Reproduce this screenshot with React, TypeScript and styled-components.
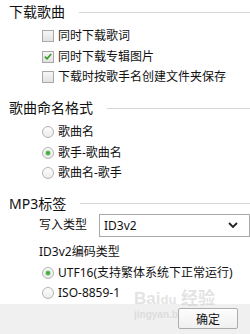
import React from 'react';
import styled, { createGlobalStyle } from 'styled-components';

const GlobalStyle = createGlobalStyle`
  html, body {
    margin: 0;
    padding: 0;
    background: #fff;
  }
  body {
    font-family: "Noto Sans", "Noto Sans CJK SC", sans-serif;
    color: #111;
  }
`;

function CheckIcon() {
  return (
    <svg width="11" height="11" viewBox="0 0 11 11">
      <path d="M2 5.6 L4.4 8 L9 2.8" fill="none" stroke="#3b9b2f" strokeWidth="1.9" />
    </svg>
  );
}

function Check({ label, checked }: { label: string; checked?: boolean }) {
  return (
    <Item>
      <Box>{checked && <CheckIcon />}</Box>
      <Label>{label}</Label>
    </Item>
  );
}

function Radio({ label, checked }: { label: string; checked?: boolean }) {
  return (
    <Item>
      <Circle>{checked && <Dot />}</Circle>
      <Label>{label}</Label>
    </Item>
  );
}

function App() {
  return (
    <Page>
      <GlobalStyle />
      <Content>
        <Section>
          <Header>
            <Title>下载歌曲</Title>
            <Rule />
          </Header>
          <List>
            <Check label="同时下载歌词" />
            <Check label="同时下载专辑图片" checked />
            <Check label="下载时按歌手名创建文件夹保存" />
          </List>
        </Section>

        <Section gap={10.5}>
          <Header>
            <Title>歌曲命名格式</Title>
            <Rule />
          </Header>
          <List>
            <Radio label="歌曲名" />
            <Radio label="歌手-歌曲名" checked />
            <Radio label="歌曲名-歌手" />
          </List>
        </Section>

        <Section gap={10}>
          <Header>
            <Title>MP3标签</Title>
            <Rule />
          </Header>
          <SelectRow>
            <FieldLabel>写入类型</FieldLabel>
            <Select>
              <span>ID3v2</span>
              <svg width="10" height="8" viewBox="0 0 10 8">
                <path d="M1 2 L5 6 L9 2" fill="none" stroke="#222" strokeWidth="1.8" />
              </svg>
            </Select>
          </SelectRow>
          <SubLabel>ID3v2编码类型</SubLabel>
          <RadioList>
            <Radio label="UTF16(支持繁体系统下正常运行)" checked />
            <Radio label="ISO-8859-1" />
          </RadioList>
        </Section>
      </Content>

      <Footer>
        <Watermark>
          <Mark>Bai<Paw>du</Paw> 经验</Mark>
          <Url>jingyan.baidu.com</Url>
        </Watermark>
        <Button>确定</Button>
      </Footer>
    </Page>
  );
}

export default App;

const Page = styled.div`
  position: relative;
  width: 250px;
  height: 334px;
  overflow: hidden;
  display: flex;
  flex-direction: column;
`;

const Content = styled.div`
  padding-top: 2px;
  flex: 1;
`;

const Section = styled.section<{ gap?: number }>`
  margin-top: ${(p) => p.gap ?? 0}px;
`;

const Header = styled.div`
  display: flex;
  align-items: center;
  height: 20px;
  padding-left: 9px;
  gap: 14px;
`;

const Title = styled.div`
  font-size: 14px;
  line-height: 20px;
  white-space: nowrap;
`;

const Rule = styled.div`
  flex: 1;
  height: 1px;
  background: #d6d6d6;
`;

const List = styled.div`
  margin-top: 4px;
  padding-left: 42px;
`;

const RadioList = styled.div`
  margin-top: 1px;
  padding-left: 42px;
`;

const Item = styled.div`
  display: flex;
  align-items: center;
  height: 20.5px;
  gap: 4px;
`;

const Box = styled.div`
  box-sizing: border-box;
  width: 12px;
  height: 12px;
  border: 1px solid #a8a8a8;
  background: linear-gradient(#f6f6f6, #e2e2e2);
  display: flex;
  align-items: center;
  justify-content: center;
`;

const Circle = styled.div`
  box-sizing: border-box;
  width: 12px;
  height: 12px;
  border-radius: 50%;
  border: 1px solid #b2b2b2;
  background: linear-gradient(#fdfdfd, #ececec);
  display: flex;
  align-items: center;
  justify-content: center;
`;

const Dot = styled.div`
  width: 4px;
  height: 4px;
  border-radius: 50%;
  background: #3fa83a;
  box-shadow: 0 0 1px 1px rgba(80, 180, 80, 0.35);
`;

const Label = styled.span`
  font-size: 12px;
  line-height: 16px;
  white-space: nowrap;
`;

const SelectRow = styled.div`
  display: flex;
  align-items: center;
  height: 23px;
  padding-left: 39px;
`;

const FieldLabel = styled.span`
  width: 66px;
  font-size: 12px;
  line-height: 16px;
`;

const Select = styled.div`
  box-sizing: border-box;
  flex: none;
  width: 151px;
  height: 23px;
  border: 1px solid #a9a9a9;
  background: #fff;
  display: flex;
  align-items: center;
  justify-content: space-between;
  padding: 0 11px 0 4px;
  font-size: 12px;
`;

const SubLabel = styled.div`
  margin-top: 5px;
  height: 20px;
  padding-left: 39px;
  font-size: 12px;
  line-height: 20px;
`;

const Footer = styled.footer`
  position: relative;
  height: 31px;
  background: #f0f0f0;
  display: flex;
  align-items: center;
  justify-content: flex-end;
  padding-right: 12px;
`;

const Button = styled.button`
  position: relative;
  z-index: 1;
  width: 60px;
  height: 21px;
  box-sizing: border-box;
  border: 1px solid #adadad;
  border-radius: 2px;
  background: linear-gradient(#fdfdfd, #f0f0f0);
  font-family: "Noto Sans CJK SC", sans-serif;
  font-size: 12px;
  color: #111;
  padding: 0;
`;

const Watermark = styled.div`
  position: absolute;
  left: 134px;
  top: -14px;
  color: rgba(200, 200, 200, 0.5);
  pointer-events: none;
`;

const Mark = styled.div`
  font-family: "Liberation Sans", "Noto Sans CJK SC", sans-serif;
  font-weight: bold;
  font-size: 17px;
  line-height: 18px;
`;

const Paw = styled.span`
  font-size: 13px;
`;

const Url = styled.div`
  font-family: "Liberation Sans", sans-serif;
  font-weight: bold;
  font-size: 10px;
  line-height: 12px;
`;
